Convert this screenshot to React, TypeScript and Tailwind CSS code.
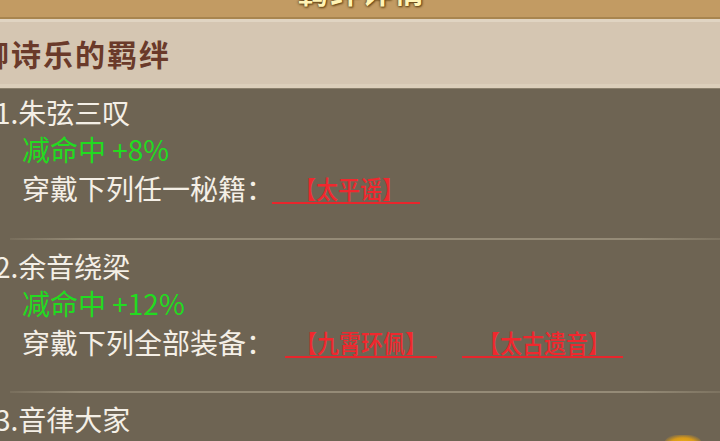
import React from "react";

const font = { fontFamily: '"Noto Sans CJK SC", "Noto Sans", sans-serif' };

function Link({ text, className }: { text: string; className: string }) {
  return (
    <span
      className={`inline-block border-b-2 border-[#e8262c] text-[22px] font-medium leading-[28px] text-[#f0282e] ${className}`}
    >
      <span className="inline-block scale-y-[1.12]">{text}</span>
    </span>
  );
}

function Separator() {
  return (
    <div className="ml-[10px] h-[2px] bg-[linear-gradient(90deg,rgba(160,150,128,0.2),#958b77_10%,#958b77_88%,rgba(160,150,128,0.3))]" />
  );
}

export default function App() {
  return (
    <div
      className="relative h-[441px] w-[720px] overflow-hidden bg-[#6e6453]"
      style={font}
    >
      {/* top bar */}
      <div className="relative h-[17px] overflow-hidden bg-[#c29b63]">
        <div className="absolute left-[298px] top-[-25px] text-[30px] font-bold leading-[30px] tracking-[2px] text-[#fff3b4] [text-shadow:0_0_2px_#6b4a1a,0_0_3px_#6b4a1a,1px_1px_2px_#6b4a1a]">
          羁绊详情
        </div>
      </div>
      <div className="h-[2px] bg-[#a8854f]" />
      {/* header */}
      <div className="h-[3px] bg-[#e0d4c2]" />
      <div className="flex h-[62px] items-center bg-[#d5c6b2]">
        <span className="ml-[-21px] text-[30px] font-bold leading-[34px] tracking-[2px] text-[#6a3a2a]">
          柳诗乐的羁绊
        </span>
      </div>
      <div className="h-[4px] bg-[#dccfbb]" />
      <div className="h-[1px] bg-[#8b806c]" />

      {/* content */}
      <div className="pt-[4px] text-[28px] leading-[38px] text-[#f4efe6]">
        <div className="pb-[31px]">
          <div className="ml-[-5px] h-[37px]">1.朱弦三叹</div>
          <div className="h-[39px] pl-[22px] text-[#22db20]">减命中 +8%</div>
          <div className="flex items-center pl-[22px]">
            <span>穿戴下列任一秘籍：</span>
            <Link text="【太平谣】" className="ml-[-2px] mt-[2px] pl-[22px] pr-[16px]" />
          </div>
        </div>
        <Separator />
        <div className="pb-[30px] pt-[7px]">
          <div className="ml-[-5px] h-[37px]">2.余音绕梁</div>
          <div className="h-[39px] pl-[22px] text-[#22db20]">减命中 +12%</div>
          <div className="flex items-center pl-[22px]">
            <span>穿戴下列全部装备：</span>
            <Link text="【九霄环佩】" className="ml-[11px] mt-[2px] pl-[10px] pr-[10px]" />
            <Link text="【太古遗音】" className="ml-[25px] mt-[2px] pl-[16px] pr-[13px]" />
          </div>
        </div>
        <Separator />
        <div className="pt-[7px]">
          <div className="ml-[-5px]">3.音律大家</div>
        </div>
      </div>

      {/* glow at bottom right */}
      <div className="absolute bottom-[-14px] left-[664px] h-[20px] w-[38px] rounded-full bg-[radial-gradient(ellipse_at_center,#f5b418_0%,#d89a1a_50%,rgba(110,100,83,0)_80%)]" />
    </div>
  );
}
